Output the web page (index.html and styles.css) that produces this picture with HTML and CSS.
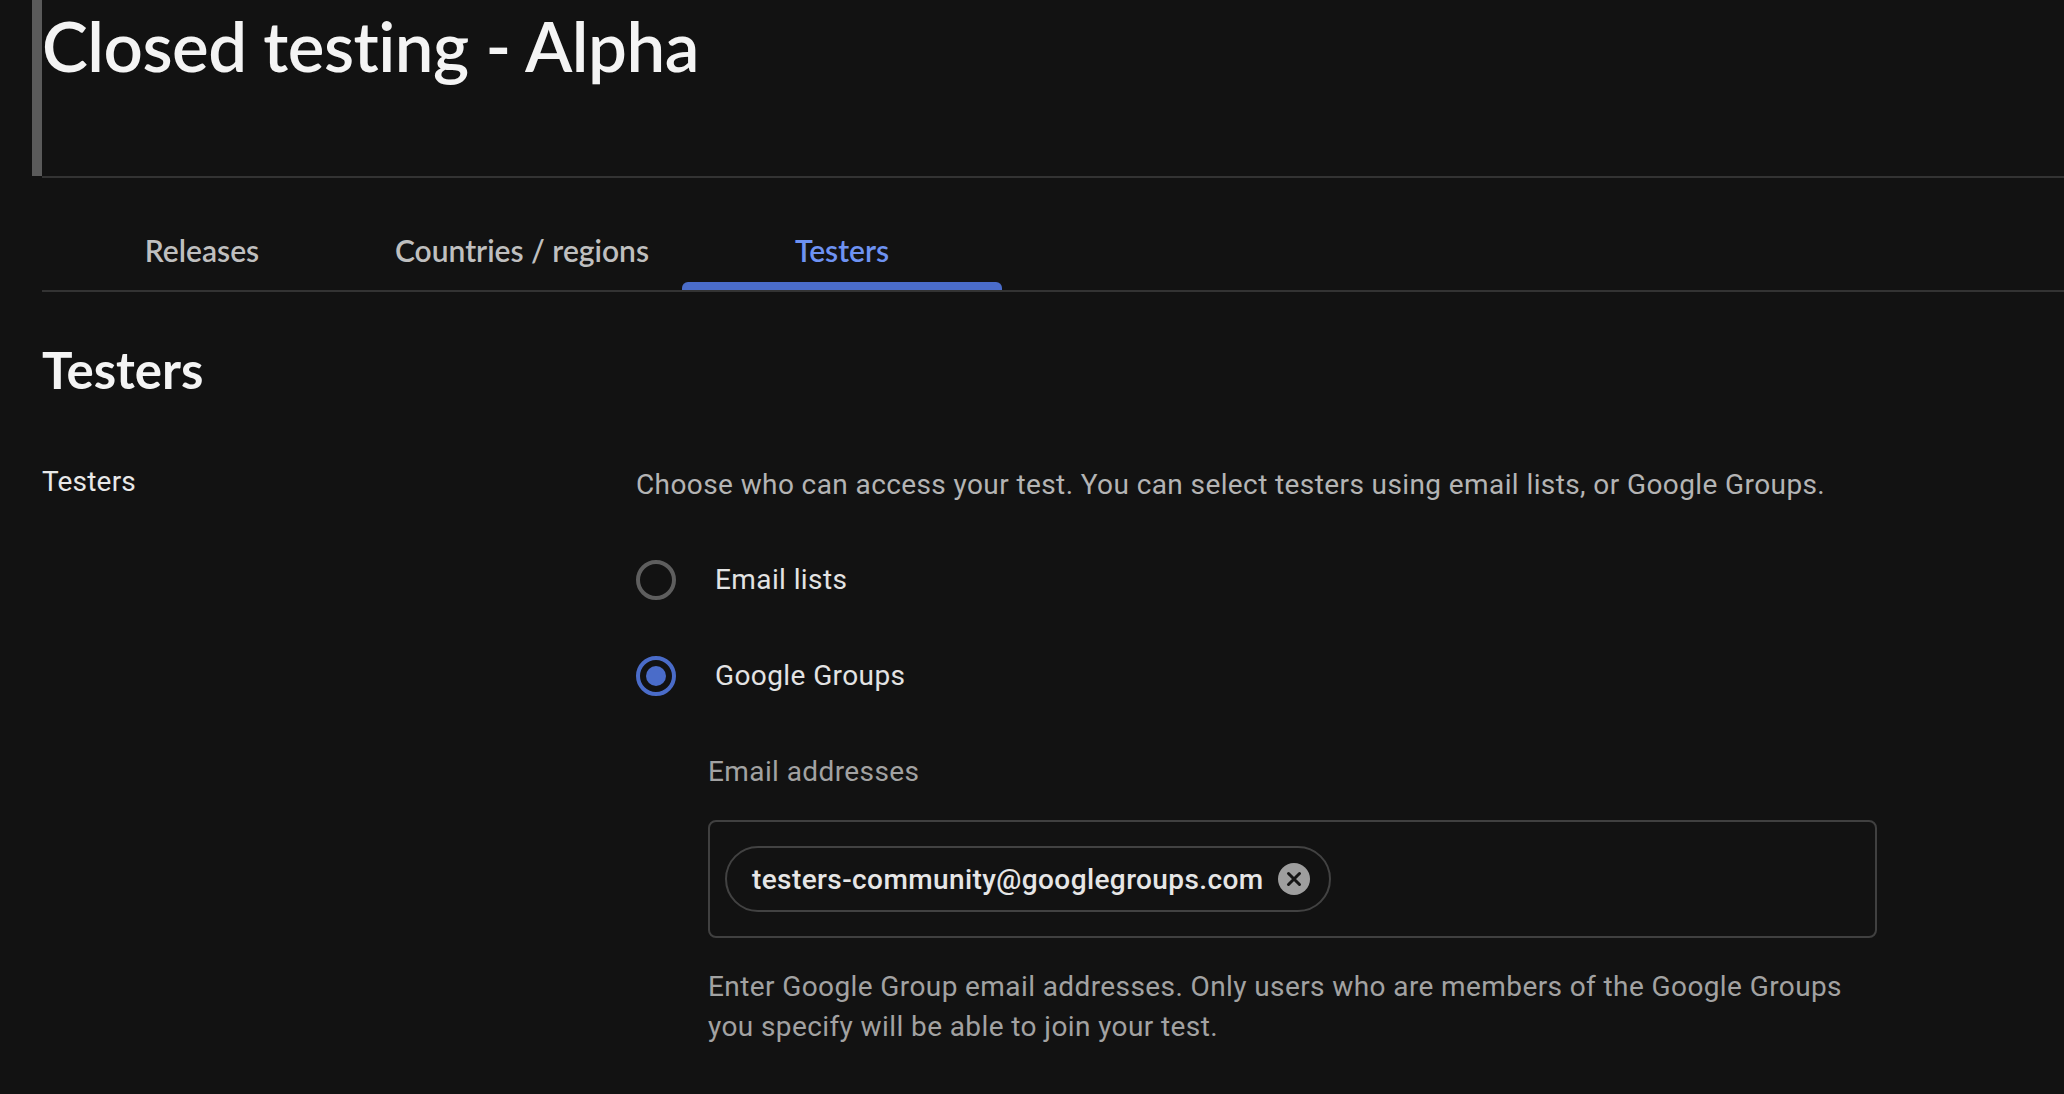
FILE: index.html
```html
<!DOCTYPE html>
<html lang="en">
<head>
<meta charset="utf-8">
<title>Closed testing - Alpha</title>
<link rel="stylesheet" href="styles.css">
</head>
<body>
<div class="page">
  <header class="header">
    <div class="header-bar"></div>
    <div class="header-main">
      <h1 class="page-title">Closed testing - Alpha</h1>
    </div>
  </header>

  <nav class="tabs">
    <div class="tab"><span class="tab-label">Releases</span><span class="tab-indicator"></span></div>
    <div class="tab"><span class="tab-label">Countries / regions</span><span class="tab-indicator"></span></div>
    <div class="tab tab-active"><span class="tab-label">Testers</span><span class="tab-indicator"></span></div>
  </nav>

  <h2 class="section-title">Testers</h2>

  <div class="form-row">
    <div class="form-label">Testers</div>
    <div class="form-body">
      <p class="intro">Choose who can access your test. You can select testers using email lists, or Google Groups.</p>

      <div class="radio-row radio-row-first">
        <span class="radio"></span>
        <span class="radio-text">Email lists</span>
      </div>
      <div class="radio-row">
        <span class="radio radio-checked"><span class="radio-dot"></span></span>
        <span class="radio-text">Google Groups</span>
      </div>

      <div class="sub">
        <div class="sub-label">Email addresses</div>
        <div class="chip-input">
          <div class="chip">
            <span class="chip-text">testers-community@googlegroups.com</span>
            <span class="chip-remove">
              <svg width="32" height="32" viewBox="0 0 32 32" aria-hidden="true">
                <circle cx="16" cy="16" r="16" fill="#9e9e9e"/>
                <path d="M10.5 10.5 L21.5 21.5 M21.5 10.5 L10.5 21.5" stroke="#161616" stroke-width="3" stroke-linecap="round"/>
              </svg>
            </span>
          </div>
        </div>
        <p class="helper">Enter Google Group email addresses. Only users who are members of the Google Groups you specify will be able to join your test.</p>
      </div>
    </div>
  </div>
</div>
</body>
</html>
```

FILE: styles.css
```css
html, body {
  margin: 0;
  padding: 0;
  background: #121212;
}

body {
  font-family: Roboto, "Liberation Sans", sans-serif;
  color: #e3e3e3;
  height: 1094px;
  overflow: hidden;
}

.page {
  padding-left: 32px;
}

.header {
  display: flex;
  align-items: flex-start;
}

.header-bar {
  width: 10px;
  height: 176px;
  background: #5a5a5a;
  flex: none;
}

.header-main {
  flex: 1;
  height: 176px;
  border-bottom: 2px solid #333333;
}

.page-title {
  margin: 0;
  padding-top: 10px;
  font-family: Lato, "Open Sans", sans-serif;
  font-weight: 600;
  font-size: 69px;
  line-height: 72px;
  color: #f4f4f4;
  letter-spacing: -0.5px;
}

.tabs {
  display: flex;
  margin-left: 10px;
  border-bottom: 2px solid #333333;
}

.tab {
  width: 320px;
  height: 112px;
  display: flex;
  flex-direction: column;
  align-items: center;
}

.tab-label {
  margin-top: 52px;
  line-height: 40px;
  font-family: Lato, "Open Sans", sans-serif;
  font-weight: 600;
  font-size: 30px;
  color: #bfbfbf;
}

.tab-indicator {
  margin-top: auto;
  align-self: stretch;
  height: 8px;
  border-radius: 6px 6px 0 0;
}

.tab-active .tab-label {
  color: #6e92f2;
}

.tab-active .tab-indicator {
  background: #4a6cc9;
}

.section-title {
  margin: 50px 0 0 10px;
  font-family: Lato, "Open Sans", sans-serif;
  font-weight: 700;
  font-size: 51px;
  line-height: 56px;
  color: #f4f4f4;
}

.form-row {
  display: flex;
  margin-top: 67px;
  margin-left: 10px;
}

.form-label {
  width: 594px;
  flex: none;
  margin-top: -3px;
  font-size: 28px;
  line-height: 40px;
  letter-spacing: 0.2px;
  color: #e8e8e8;
}

.form-body {
  flex: 1;
}

.intro {
  margin: 0;
  font-size: 28px;
  line-height: 40px;
  letter-spacing: 0.4px;
  color: #b4b4b4;
}

.radio-row {
  display: flex;
  align-items: center;
  height: 40px;
  margin-top: 56px;
}

.radio-row-first {
  margin-top: 55px;
}

.radio {
  width: 40px;
  height: 40px;
  box-sizing: border-box;
  border: 4px solid #5e5e5e;
  border-radius: 50%;
  display: flex;
  align-items: center;
  justify-content: center;
  flex: none;
}

.radio-checked {
  border-color: #4a6cc9;
}

.radio-dot {
  width: 20px;
  height: 20px;
  border-radius: 50%;
  background: #4a6cc9;
}

.radio-text {
  margin-left: 39px;
  font-size: 28px;
  line-height: 40px;
  letter-spacing: 0.4px;
  color: #e3e3e3;
}

.sub {
  margin-left: 72px;
  margin-top: 56px;
  width: 1169px;
}

.sub-label {
  font-size: 28px;
  line-height: 40px;
  letter-spacing: 0.4px;
  color: #a2a2a2;
}

.chip-input {
  margin-top: 28px;
  box-sizing: border-box;
  border: 2px solid #404040;
  border-radius: 8px;
  padding: 24px 15px;
  display: flex;
}

.chip {
  display: flex;
  align-items: center;
  height: 66px;
  box-sizing: border-box;
  border: 2px solid #424242;
  border-radius: 33px;
  padding: 0 19px 0 25px;
}

.chip-text {
  font-size: 28px;
  font-weight: 500;
  letter-spacing: 0.4px;
  color: #e6e6e6;
}

.chip-remove {
  display: flex;
  margin-left: 14px;
}

.helper {
  margin: 29px 0 0;
  font-size: 28px;
  line-height: 40px;
  letter-spacing: 0.4px;
  color: #a2a2a2;
}
```
